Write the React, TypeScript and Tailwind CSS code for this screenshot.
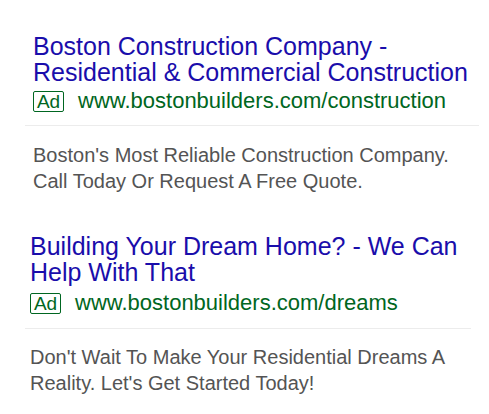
import React from "react";

const font = { fontFamily: '"Liberation Sans", Arial, Helvetica, sans-serif' };

function AdBadge() {
  return (
    <span className="inline-flex h-[21px] w-[31px] shrink-0 items-center justify-center rounded-[2px] border border-[#006621] text-[19px] leading-none text-[#006621]">
      Ad
    </span>
  );
}

type AdProps = {
  title: string;
  url: string;
  desc: string;
  textPad: string;
  width: string;
  top: string;
  urlGap: string;
  sepGap: string;
  descGap: string;
};

function Ad({ title, url, desc, textPad, width, top, urlGap, sepGap, descGap }: AdProps) {
  return (
    <div className={`${width} ${top}`}>
      <div className={textPad}>
        <div className="text-[25px] leading-[26px] text-[#1a0dab]">{title}</div>
        <div className={`${urlGap} flex h-[24px] items-center gap-[14px]`}>
          <AdBadge />
          <span className="text-[22px] leading-[24px] text-[#006621]">{url}</span>
        </div>
      </div>
      <div className={`${sepGap} h-px bg-[#ececec]`} />
      <div className={`${textPad} ${descGap} text-[20px] leading-[26px] text-[#545454]`}>
        {desc}
      </div>
    </div>
  );
}

export default function App() {
  return (
    <div className="h-[414px] w-[489px] overflow-hidden bg-white" style={font}>
      <div className="pl-[25px]">
        <Ad
          top="pt-[33px]"
          width="w-[454px]"
          textPad="pl-[8px]"
          urlGap="mt-[4px]"
          sepGap="mt-[12px]"
          descGap="mt-[16px]"
          title="Boston Construction Company - Residential & Commercial Construction"
          url="www.bostonbuilders.com/construction"
          desc="Boston's Most Reliable Construction Company. Call Today Or Request A Free Quote."
        />
        <Ad
          top="pt-[39px]"
          width="w-[446px]"
          textPad="pl-[5px]"
          urlGap="mt-[6px]"
          sepGap="mt-[13px]"
          descGap="mt-[15px]"
          title="Building Your Dream Home? - We Can Help With That"
          url="www.bostonbuilders.com/dreams"
          desc="Don't Wait To Make Your Residential Dreams A Reality. Let's Get Started Today!"
        />
      </div>
    </div>
  );
}
